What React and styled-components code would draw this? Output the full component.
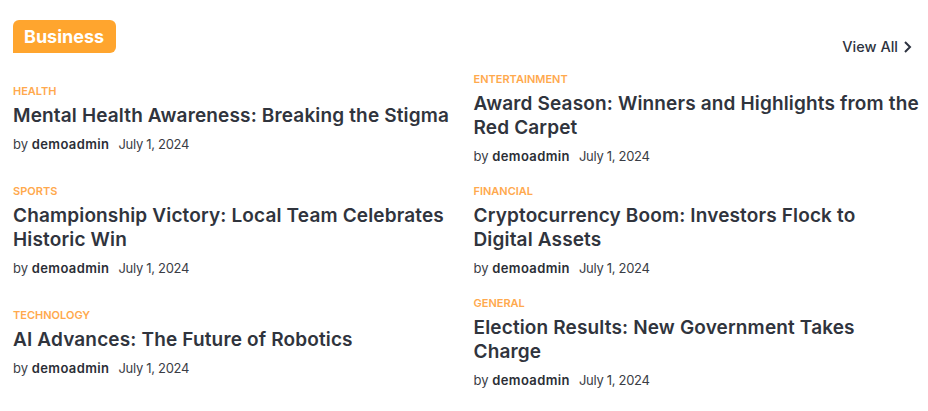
import React from "react";
import styled, { createGlobalStyle } from "styled-components";

const GlobalStyle = createGlobalStyle`
  body {
    margin: 0;
    background: #fff;
    font-family: "Inter", "Liberation Sans", sans-serif;
  }
`;

const Section = styled.section`
  padding: 20px 9px 0 13px;
`;

const Header = styled.div`
  display: flex;
  justify-content: space-between;
  align-items: flex-end;
  padding-right: 7px;
`;

const Badge = styled.h2`
  margin: 0;
  background: #ffa52e;
  color: #fff;
  font-size: 18px;
  font-weight: 700;
  line-height: 33px;
  padding: 0 12px 0 11px;
  border-radius: 6px 6px 6px 0;
`;

const ViewAll = styled.a`
  display: flex;
  align-items: center;
  gap: 5px;
  color: #2d3340;
  font-size: 14.5px;
  font-weight: 500;
  text-decoration: none;
  margin-bottom: -2px;
  svg {
    width: 9px;
    height: 12px;
  }
`;

const Grid = styled.div`
  display: grid;
  grid-template-columns: 1fr 1fr;
  column-gap: 15px;
  row-gap: 18px;
  align-items: center;
  margin-top: 19px;
`;

const Post = styled.article`
  display: flex;
  flex-direction: column;
`;

const Category = styled.span`
  color: #ffa94d;
  font-size: 11px;
  font-weight: 600;
  line-height: 14px;
`;

const Title = styled.h3`
  margin: 6px 0;
  color: #30343d;
  font-size: 19px;
  font-weight: 600;
  letter-spacing: 0.15px;
  line-height: 24px;
`;

const Meta = styled.div`
  display: flex;
  gap: 9px;
  color: #3a3d45;
  font-size: 13px;
  line-height: 20px;
`;

const Author = styled.span`
  b {
    font-weight: 600;
    letter-spacing: 0.4px;
    color: #2b2e36;
  }
`;

const PostDate = styled.span`
  letter-spacing: -0.3px;
`;

const posts = [
  { cat: "HEALTH", title: "Mental Health Awareness: Breaking the Stigma" },
  { cat: "ENTERTAINMENT", title: "Award Season: Winners and Highlights from the Red Carpet" },
  { cat: "SPORTS", title: "Championship Victory: Local Team Celebrates Historic Win" },
  { cat: "FINANCIAL", title: "Cryptocurrency Boom: Investors Flock to Digital Assets" },
  { cat: "TECHNOLOGY", title: "AI Advances: The Future of Robotics" },
  { cat: "GENERAL", title: "Election Results: New Government Takes Charge" },
];

const App = () => {
  return (
    <>
      <GlobalStyle />
      <Section>
        <Header>
          <Badge>Business</Badge>
          <ViewAll href="#">
            View All
            <svg viewBox="0 0 9 12" fill="none" stroke="currentColor" strokeWidth="2">
              <path d="M2 1l5 5-5 5" />
            </svg>
          </ViewAll>
        </Header>
        <Grid>
          {posts.map((p) => (
            <Post key={p.cat}>
              <Category>{p.cat}</Category>
              <Title>{p.title}</Title>
              <Meta>
                <Author>
                  by <b>demoadmin</b>
                </Author>
                <PostDate>July 1, 2024</PostDate>
              </Meta>
            </Post>
          ))}
        </Grid>
      </Section>
    </>
  );
};

export default App;
